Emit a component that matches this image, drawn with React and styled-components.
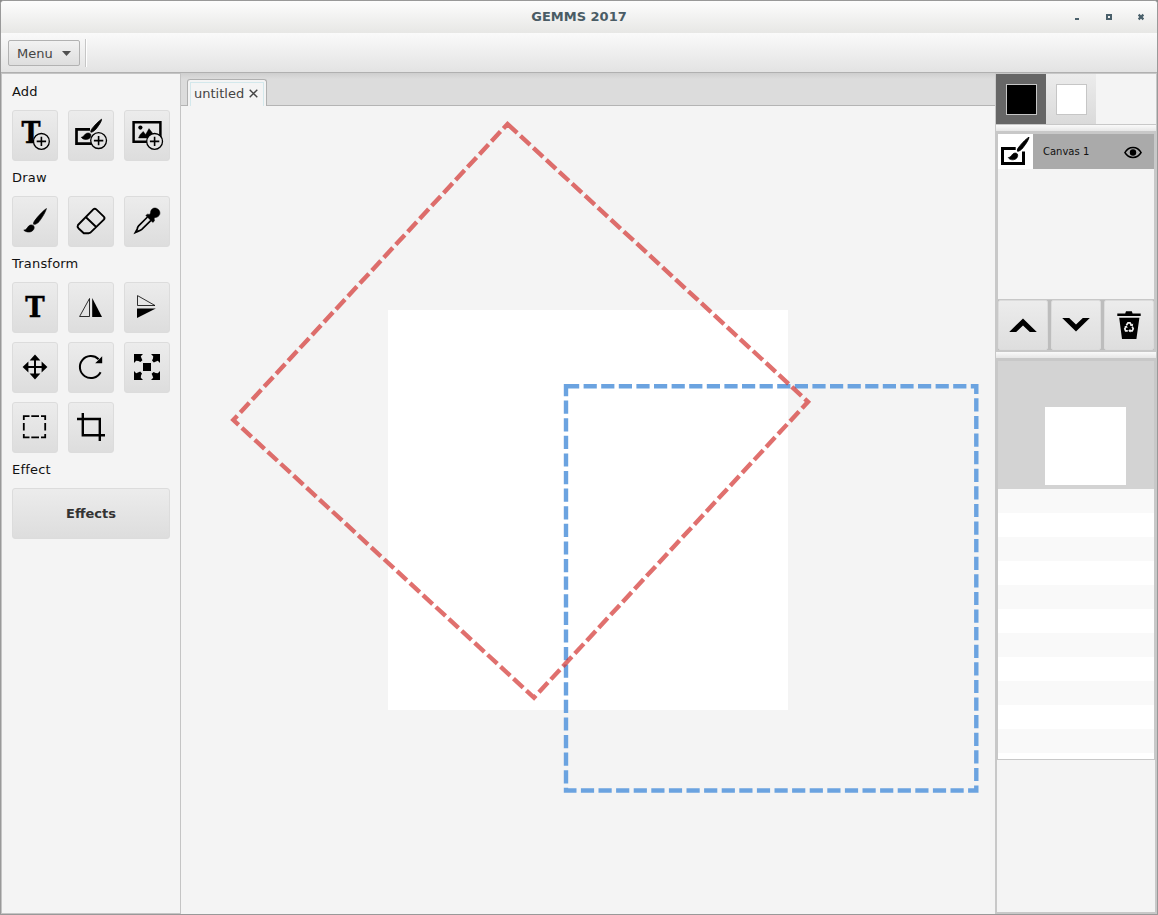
import React from "react";
import styled, { createGlobalStyle } from "styled-components";

const GlobalStyle = createGlobalStyle`
  * { box-sizing: border-box; }
  body { margin: 0; background: #8b8b8b; font-family: "DejaVu Sans", sans-serif; font-size: 13px; color: #1a1a1a; overflow: hidden; }
  svg { display: block; }
`;

const Window = styled.div`
  width: 1158px;
  height: 915px;
  display: flex;
  flex-direction: column;
  border: 1px solid #999;
  border-radius: 4px 4px 0 0;
  overflow: hidden;
  background: #f4f4f4;
`;

const TitleBar = styled.header`
  height: 32px;
  flex: none;
  display: grid;
  grid-template-columns: 100px 1fr 100px;
  align-items: center;
  background: linear-gradient(#fdfdfd, #e7e7e5);
`;

const Title = styled.h1`
  grid-column: 2;
  margin: 0;
  font-size: 13px;
  line-height: 32px;
  font-weight: bold;
  text-align: center;
  color: #4a5c65;
`;

const Toolbar = styled.div`
  height: 40px;
  flex: none;
  display: flex;
  padding: 6px 7px;
  gap: 5px;
  background: linear-gradient(#fafafa, #e3e3e3);
  border-bottom: 1px solid #b0b0b0;
`;

const MenuButton = styled.button`
  width: 72px;
  height: 26px;
  margin-top: 1px;
  padding: 0 8px;
  display: flex;
  align-items: center;
  justify-content: space-between;
  font: inherit;
  color: #444;
  border: 1px solid #b2b2b2;
  border-radius: 2px;
  background: linear-gradient(#f2f2f2, #dedede);
`;

const Separator = styled.div`
  width: 2px;
  height: 28px;
  background: linear-gradient(90deg, #c6c6c6 50%, #fff 50%);
`;

const Body = styled.div`
  flex: 1;
  min-height: 0;
  display: grid;
  grid-template-columns: 180px 814px 162px;
`;

const ToolPanel = styled.aside`
  border: 1px solid #c4c4c4;
  padding: 1px 10px 0;
`;

const GroupLabel = styled.h2`
  margin: 0;
  height: 35px;
  font-size: 13px;
  font-weight: normal;
  line-height: 34px;
  letter-spacing: 0.2px;
  color: #111;
`;

const ToolGrid = styled.div`
  display: grid;
  grid-template-columns: repeat(3, 46px);
  gap: 9px 10px;
`;

const ToolButton = styled.button`
  width: ${(p) => (p.$wide ? "158px" : "46px")};
  height: 51px;
  padding: 0;
  font: bold 13px "DejaVu Sans", sans-serif;
  color: #333;
  border: 1px solid #dcdcdc;
  border-radius: 3px;
  background: linear-gradient(#ececec, #dddddd);
`;

const Workspace = styled.main`
  display: flex;
  flex-direction: column;
  background: #f4f4f4;
`;

const TabStrip = styled.div`
  height: 33px;
  flex: none;
  padding: 6px 6px 0;
  background: linear-gradient(#cecece, #dcdcdc 6px);
  border-bottom: 1px solid #b4b4b4;
`;

const Tab = styled.div`
  width: 80px;
  height: 27px;
  padding: 2px 2px 0;
  border: 1px solid #b0b0b0;
  border-bottom: 0;
  border-radius: 3px 3px 0 0;
  background: #f4f4f4;
`;

const TabFocus = styled.div`
  height: 24px;
  padding: 0 0 2px 3px;
  display: flex;
  align-items: center;
  gap: 5px;
  border: 1px solid #d3e8ec;
  border-bottom: 0;
  color: #444;
`;

const Stage = styled.svg`
  flex: 1;
  min-height: 0;
`;

const SidePanel = styled.aside`
  display: flex;
  flex-direction: column;
  border: 1px solid #c8c8c8;
  border-bottom: 0;
`;

const Swatches = styled.div`
  height: 51px;
  flex: none;
  display: flex;
  border-bottom: 1px solid #c8c8c8;
`;

const Swatch = styled.button`
  width: 50px;
  height: 50px;
  padding: 10px 9px 9px 10px;
  border: 0;
  background: ${(p) => (p.$active ? "#666" : "linear-gradient(#ececec, #dadada)")};
`;

const SwatchColor = styled.div`
  height: 31px;
  background: ${(p) => p.$color};
  border: 1px solid #c6c6c6;
`;

const Splitter = styled.div`
  height: 6px;
  flex: none;
  background: linear-gradient(#fafafa, #e6e6e6);
`;

const Framed = styled.section`
  flex: none;
  padding: ${(p) => p.$pad};
  background: #c8c8c8;
`;

const LayerList = styled.div`
  height: 165px;
  background: #f4f4f4;
`;

const Layer = styled.div`
  height: 35px;
  display: flex;
  align-items: center;
  background: #aaaaaa;
  font-size: 10px;
  color: #111;
`;

const LayerThumb = styled.div`
  width: 35px;
  height: 35px;
  background: #fff;
`;

const LayerName = styled.span`
  flex: 1;
  padding-left: 10px;
`;

const LayerEye = styled.div`
  padding: 1px 12px 0 0;
`;

const LayerActions = styled.div`
  display: flex;
  justify-content: space-between;
  margin-top: 1px;
  background: #bdbdbd;
`;

const ActionButton = styled.button`
  width: 50px;
  height: 50px;
  padding: 0;
  border: 1px solid #dcdcdc;
  border-radius: 2px;
  background: linear-gradient(#ececec, #dedede);
`;

const Preview = styled.div`
  height: 128px;
  padding: 46px 28px 4px 47px;
  background: #d3d3d3;
`;

const PreviewPage = styled.div`
  height: 78px;
  background: #fff;
`;

const StripedList = styled.div`
  height: 270px;
  background: repeating-linear-gradient(#f9f9f9 0 24px, #fff 24px 48px);
`;

const Filler = styled.div`
  flex: 1;
  border: solid #c8c8c8;
  border-width: 0 1px 2px;
`;

const ToolIcon = ({ children }) => (
  <svg width="44" height="49" viewBox="1 1 44 49" fill="#000">{children}</svg>
);

const Plus = ({ x, y }) => (
  <g fill="none" stroke="#000">
    <circle cx={x} cy={y} r="7.9" fill="#e4e4e4" strokeWidth="1.3" />
    <path d={`M${x - 4.7} ${y}h9.4M${x} ${y - 4.7}v9.4`} strokeWidth="1.6" />
  </g>
);

const Letter = ({ x, y, size, width }) => (
  <text x={x} y={y} fontFamily="DejaVu Serif, serif" fontWeight="bold" fontSize={size} textLength={width} lengthAdjust="spacingAndGlyphs" stroke="#000" strokeWidth=".5">T</text>
);

const BRUSH_HANDLE = "M34.4 12.6C31.5 14.5 25.6 20.6 22.6 24.8C21.6 26.2 21.3 27.5 21.6 28.2C23.4 28.6 25.3 27.5 27 25.7C30 22 33.8 15.6 34.4 12.6Z";
const BRUSH_TIP = "M11.8 34.2C14.6 33.9 15 32 16.4 30.3C18 28.6 20.2 28.6 21.6 29.8C22.6 31.3 22.2 33.3 20.6 34.7C18.4 36.6 14 36.3 11.8 34.2Z";

const toolGroups = [
  {
    label: "Add",
    tools: [
      ["add-text", <><Letter x={9.5} y={33} size={30} width={19} /><Plus x={29.4} y={31.4} /></>],
      ["add-canvas", <>
        <path d="M22 19.3H8.5V33.7H25" fill="none" stroke="#000" strokeWidth="2.7" />
        <path d="M33.6 9.2C31 10.7 26 15.8 23.6 19.2C22.8 20.6 22.6 21.5 22.9 22.2C24.4 22.2 26.4 21 28 19C30.6 15.7 33.6 11.5 33.6 9.2Z" stroke="#000" strokeWidth=".8" />
        <path d="M13.3 27.3C15.4 27 16 25.5 17.4 24C19 22.7 21.4 22.7 22.6 24C23.4 25.6 22.6 27.3 21.4 28.4C19 30.2 14.8 29.8 13.3 27.3Z" stroke="#000" strokeWidth=".6" />
        <Plus x={30.6} y={30.6} /></>],
      ["add-image", <>
        <path d="M9.6 12.2H36.4V31.7H9.6Z" fill="none" stroke="#000" strokeWidth="2.5" />
        <circle cx="16.4" cy="17.6" r="2.1" />
        <path d="M14.5 28L16 24.8L19.2 21.4L21.6 24.5L25 18.6L30 25V28Z" stroke="#000" strokeWidth=".4" />
        <Plus x={30.6} y={31.4} /></>],
    ],
  },
  {
    label: "Draw",
    tools: [
      ["brush", <g stroke="#000" strokeWidth=".7"><path d={BRUSH_HANDLE} /><path d={BRUSH_TIP} /></g>],
      ["eraser", <path d="M25.3 13.4Q26.8 12 28.3 13.4L35.8 20.6Q37.2 22 35.8 23.6L22.4 36.6L20.8 37.2H15.8L10.4 32.2Q9 30.7 10 29ZM18 21.2L28.2 31" fill="none" stroke="#000" strokeWidth="1.9" strokeLinejoin="round" />],
      ["picker", <>
        <path d="M26.5 17C26.5 11.5 32 10.8 34.5 13.6C37.3 16.4 36 21.3 31 21.6L30.2 22.6L30.4 25L28.8 26.4L21.8 19.4L23.4 18.2L25.6 18.4Z" stroke="#000" strokeWidth=".5" />
        <path d="M23.5 21L14.6 29.8Q13.3 31.2 13.3 33L11.4 36.4L15 34.9Q16.5 34.6 17.8 33.4L27 24.4" fill="none" stroke="#000" strokeWidth="1.7" /></>],
    ],
  },
  {
    label: "Transform",
    tools: [
      ["text", <Letter x={13.3} y={35} size={27} width={19.4} />],
      ["flip-h", <><path d="M11.6 34.5L21.5 16.5V34.5Z" fill="none" stroke="#000" strokeWidth=".8" /><path d="M24.2 16L34 35H24.2Z" /></>],
      ["flip-v", <><path d="M13.5 13.6L31 23.5H13.5Z" fill="none" stroke="#000" strokeWidth=".8" /><path d="M13 26.5H31.8L13 36Z" /></>],
      ["move", <>
        <path d="M15 25H31M23 17V33" stroke="#000" strokeWidth="2" />
        <path d="M10.6 25L16.4 19.6V30.4ZM35.4 25L29.6 19.6V30.4ZM23 12.6L17.6 18.4H28.4ZM23 37.4L17.6 31.6H28.4Z" /></>],
      ["rotate", <><path d="M32.6 30.2A11 11 0 1 1 30.6 17.2" fill="none" stroke="#000" strokeWidth="2" /><path d="M34.2 14.2V21.2H27.2Z" /></>],
      ["scale", <>
        <path d="M19 21H27V29H19Z" />
        {[0, 90, 180, 270].map((a) => (
          <path key={a} transform={`rotate(${a} 23 25)`} d="M10 12H19L16.8 14.2L17.4 16L18.4 18.2L16.4 20L14.4 19L12.2 18.8L10 21Z" />
        ))}</>],
      ["select", <path d="M11.8 18V14.2H17.5M19.3 14.2H27M29 14.2H33.2V18M33.2 21V28.5M33.2 32V35.3H29M27 35.3H19.3M17.5 35.3H11.8V32M11.8 28.5V21" fill="none" stroke="#000" strokeWidth="1.8" />],
      ["crop", <path d="M9 17H31.8V39M14.8 11V33.2H37" fill="none" stroke="#000" strokeWidth="2.4" />],
    ],
  },
];

const CanvasIcon = () => (
  <svg width="35" height="35" viewBox="0 0 35 35">
    <path d="M17.7 14.4H4.5V29.5H25.5V17.5" fill="none" stroke="#000" strokeWidth="3" />
    <path d="M31 3.2C28 4.7 22 11.2 19.8 14.6C19.3 15.7 19.2 16.6 19.6 17.3C21.4 17.2 23.4 15.8 25.2 13.4C28 9.8 30.8 5.6 31 3.2Z" stroke="#000" strokeWidth=".9" />
    <path d="M10.3 23.6C12.6 23.4 13.2 21.6 14.8 20C16.4 18.6 18.4 18.8 19.4 20C20.2 21.8 19.4 23.6 18 24.8C15.4 26.6 11.6 26 10.3 23.6Z" stroke="#000" strokeWidth=".7" />
  </svg>
);

const EyeIcon = () => (
  <svg width="18" height="13" viewBox="0 0 18 13">
    <path d="M.9 6.5C4.8-.3 13.2-.3 17.1 6.5C13.2 13 4.8 13 .9 6.5Z" fill="none" stroke="#000" strokeWidth="1.5" />
    <circle cx="9" cy="6.5" r="3.2" />
  </svg>
);

const ActionIcon = ({ children }) => (
  <svg width="48" height="48" viewBox="1 1 48 48">{children}</svg>
);

const TrashIcon = () => (
  <ActionIcon>
    <path d="M13.3 13.5H21.2L22 11.2H27.8L28.6 13.5H36.7V16H13.3ZM15.2 17.8H35.4L32.4 39H18Z" />
    <g fill="none" stroke="#eee" strokeWidth="1.7">
      <path d="M22.4 25.2L24 22.8H26L27.4 25.2" />
      <path d="M28.2 26.6L29.2 28.8L28.2 30.8H25.6" />
      <path d="M23.8 30.8H21.6L20.8 28.8L22 26.6" />
    </g>
    <path d="M25.8 25.8L28.8 26.2L29.2 23.4ZM26.4 28.8V32.6L24.2 30.8ZM20.2 26.8L22.6 25.6L23.8 28Z" fill="#eee" />
  </ActionIcon>
);

const WindowControls = () => (
  <svg width="88" height="8" viewBox="-16 0 88 8" fill="#4a606b">
    <path d="M2 5H6V7H2Z" />
    <path fillRule="evenodd" d="M33 1H39V7H33ZM35 3V5H37V3Z" />
    <path d="M65.6 1.6L70.4 6.4M70.4 1.6L65.6 6.4" stroke="#4a606b" strokeWidth="2.2" />
  </svg>
);

export default function App() {
  return (
    <>
      <GlobalStyle />
      <Window>
        <TitleBar>
          <Title>GEMMS 2017</Title>
          <WindowControls />
        </TitleBar>
        <Toolbar>
          <MenuButton>
            Menu
            <svg width="9" height="5" viewBox="0 0 9 5"><path d="M0 0H9L4.5 5Z" fill="#505050" /></svg>
          </MenuButton>
          <Separator />
        </Toolbar>
        <Body>
          <ToolPanel>
            {toolGroups.map((g) => (
              <React.Fragment key={g.label}>
                <GroupLabel>{g.label}</GroupLabel>
                <ToolGrid>
                  {g.tools.map(([id, icon]) => (
                    <ToolButton key={id} aria-label={id}><ToolIcon>{icon}</ToolIcon></ToolButton>
                  ))}
                </ToolGrid>
              </React.Fragment>
            ))}
            <GroupLabel>Effect</GroupLabel>
            <ToolButton $wide>Effects</ToolButton>
          </ToolPanel>
          <Workspace>
            <TabStrip>
              <Tab>
                <TabFocus>
                  untitled
                  <svg width="9" height="9" viewBox="0 0 9 9"><path d="M.7.7L8.3 8.3M8.3.7L.7 8.3" stroke="#444" strokeWidth="1.4" /></svg>
                </TabFocus>
              </Tab>
            </TabStrip>
            <Stage width="814" height="808" viewBox="181 106 814 808" fill="none">
              <rect x="388" y="310" width="400" height="400" fill="#fff" />
              <path d="M566 386.2H976.3V790.5H566Z" stroke="#6ba3e0" strokeWidth="4.4" strokeDasharray="13.2 4.4" />
              <path d="M507.5 124L808 401.8L534 697.6L233.3 420Z" stroke="#d33331" strokeOpacity=".7" strokeWidth="4.4" strokeDasharray="13.2 4.4" />
            </Stage>
          </Workspace>
          <SidePanel>
            <Swatches>
              <Swatch $active><SwatchColor $color="#000" /></Swatch>
              <Swatch><SwatchColor $color="#fff" /></Swatch>
            </Swatches>
            <Splitter />
            <Framed $pad="3px 2px 2px">
              <LayerList>
                <Layer>
                  <LayerThumb><CanvasIcon /></LayerThumb>
                  <LayerName>Canvas 1</LayerName>
                  <LayerEye><EyeIcon /></LayerEye>
                </Layer>
              </LayerList>
              <LayerActions>
                <ActionButton><ActionIcon><path d="M11.2 32L25 18.4L38.8 32H31.8L25 25.4L18.2 32Z" /></ActionIcon></ActionButton>
                <ActionButton><ActionIcon><path d="M11.2 18H18.2L25 24.6L31.8 18H38.8L25 31.6Z" /></ActionIcon></ActionButton>
                <ActionButton><TrashIcon /></ActionButton>
              </LayerActions>
            </Framed>
            <Splitter />
            <Framed $pad="3px 2px 1px">
              <Preview><PreviewPage /></Preview>
              <StripedList />
            </Framed>
            <Filler />
          </SidePanel>
        </Body>
      </Window>
    </>
  );
}
